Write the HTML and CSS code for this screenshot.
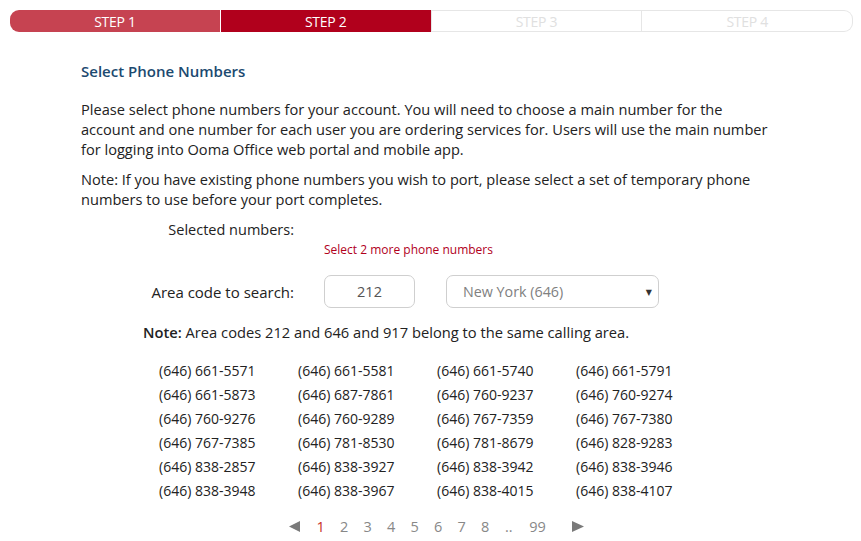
FILE: index.html
```html
<!DOCTYPE html>
<html>
<head>
<meta charset="utf-8">
<link rel="stylesheet" href="styles.css">
</head>
<body>
<div class="steps">
  <div class="step done first">STEP 1</div>
  <div class="step active">STEP 2</div>
  <div class="step todo">STEP 3</div>
  <div class="step todo last">STEP 4</div>
</div>
<div class="content">
  <h2 class="title">Select Phone Numbers</h2>
  <p class="text">Please select phone numbers for your account. You will need to choose a main number for the<br>account and one number for each user you are ordering services for. Users will use the main number<br>for logging into Ooma Office web portal and mobile app.</p>
  <p class="text note1">Note: If you have existing phone numbers you wish to port, please select a set of temporary phone<br>numbers to use before your port completes.</p>
  <div class="row sel-row">
    <div class="label sel-label">Selected numbers:</div>
  </div>
  <div class="row">
    <div class="label"></div>
    <div class="warn">Select 2 more phone numbers</div>
  </div>
  <div class="row area-row">
    <div class="label area-label">Area code to search:</div>
    <div class="controls">
      <div class="input">212</div>
      <div class="select"><span>New York (646)</span><span class="caret">▼</span></div>
    </div>
  </div>
  <p class="note2"><b>Note:</b> Area codes 212 and 646 and 917 belong to the same calling area.</p>
  <div class="numbers">
    <span>(646) 661-5571</span><span>(646) 661-5581</span><span>(646) 661-5740</span><span>(646) 661-5791</span>
    <span>(646) 661-5873</span><span>(646) 687-7861</span><span>(646) 760-9237</span><span>(646) 760-9274</span>
    <span>(646) 760-9276</span><span>(646) 760-9289</span><span>(646) 767-7359</span><span>(646) 767-7380</span>
    <span>(646) 767-7385</span><span>(646) 781-8530</span><span>(646) 781-8679</span><span>(646) 828-9283</span>
    <span>(646) 838-2857</span><span>(646) 838-3927</span><span>(646) 838-3942</span><span>(646) 838-3946</span>
    <span>(646) 838-3948</span><span>(646) 838-3967</span><span>(646) 838-4015</span><span>(646) 838-4107</span>
  </div>
  <div class="pager">
    <svg class="arrow" width="11" height="11" viewBox="0 0 11 11"><polygon points="0,5.5 11,0 11,11" fill="#7a7a7a"/></svg>
    <span class="page current">1</span>
    <span class="page">2</span>
    <span class="page">3</span>
    <span class="page">4</span>
    <span class="page">5</span>
    <span class="page">6</span>
    <span class="page">7</span>
    <span class="page">8</span>
    <span class="page">..</span>
    <span class="page last-page">99</span>
    <svg class="arrow next" width="12" height="11" viewBox="0 0 12 11"><polygon points="0,0 12,5.5 0,11" fill="#7a7a7a"/></svg>
  </div>
</div>
</body>
</html>
```
FILE: styles.css
```css
* { box-sizing: border-box; }
body {
  margin: 0;
  background: #fff;
  font-family: "Open Sans", "DejaVu Sans", sans-serif;
  color: #222;
}
.steps {
  display: flex;
  margin: 10px 8px 0 10px;
  height: 22px;
}
.step {
  flex: 1;
  display: flex;
  align-items: center;
  justify-content: center;
  font-size: 14px;
  color: #fff;
  letter-spacing: -0.3px;
}
.step.done { background: #c64351; border-right: 1px solid #fff; }
.step.active { background: #b1001c; }
.step.first { border-radius: 9px 0 0 9px; }
.step.todo {
  color: #e0e0e0;
  border: 1px solid #e6e6e6;
  border-left: none;
}
.step.todo:nth-child(3) { border-left: 1px solid #e6e6e6; }
.step.last { border-radius: 0 9px 9px 0; }
.content {
  width: 700px;
  margin: 0 0 0 81px;
}
.title {
  margin: 0;
  padding-top: 29px;
  font-size: 15px;
  font-weight: 600;
  color: #1c4a70;
  line-height: 20px;
}
.text {
  margin: 18px 0 0;
  font-size: 14.6px;
  line-height: 20px;
  color: #222;
  white-space: nowrap;
}
.text.note1 { margin-top: 11px; line-height: 19.5px; }
.row {
  display: flex;
  align-items: center;
  gap: 30px;
}
.sel-row { margin-top: 11px; }
.label {
  width: 213px;
  flex: none;
  text-align: right;
  font-size: 14px;
  line-height: 20px;
}
.sel-label { font-size: 14.5px; }
.area-label { font-size: 15px; }
.warn {
  color: #b1001c;
  font-size: 12px;
  line-height: 20px;
}
.area-row { margin-top: 15px; }
.controls {
  display: flex;
  gap: 31px;
}
.input {
  width: 91px;
  height: 33px;
  border: 1px solid #cfcfcf;
  border-radius: 7px;
  display: flex;
  align-items: center;
  justify-content: center;
  font-size: 14.5px;
  color: #555;
}
.select {
  width: 213px;
  height: 33px;
  border: 1px solid #cfcfcf;
  border-radius: 7px;
  display: flex;
  align-items: center;
  justify-content: space-between;
  padding: 0 6px 0 16px;
  font-size: 14.3px;
  color: #808080;
}
.caret { font-size: 8px; color: #333; }
.note2 {
  margin: 14px 0 0 62px;
  font-size: 14.7px;
  line-height: 20px;
  color: #222;
}
.note2 b { font-weight: 600; }
.numbers {
  display: grid;
  grid-template-columns: repeat(4, 139px);
  grid-auto-rows: 24px;
  margin: 16px 0 0 78px;
  font-size: 14px;
  color: #222;
  align-items: center;
}
.pager {
  display: flex;
  align-items: center;
  margin: 12px 0 0 208px;
  font-size: 14.5px;
  color: #888;
  height: 24px;
}
.arrow { margin-right: 9px; }
.page { width: 23.5px; text-align: center; }
.page.last-page { width: 30px; margin-left: 2px; }
.page.current { color: #c8302a; }
.arrow.next { margin: 0 0 0 19px; }
```
